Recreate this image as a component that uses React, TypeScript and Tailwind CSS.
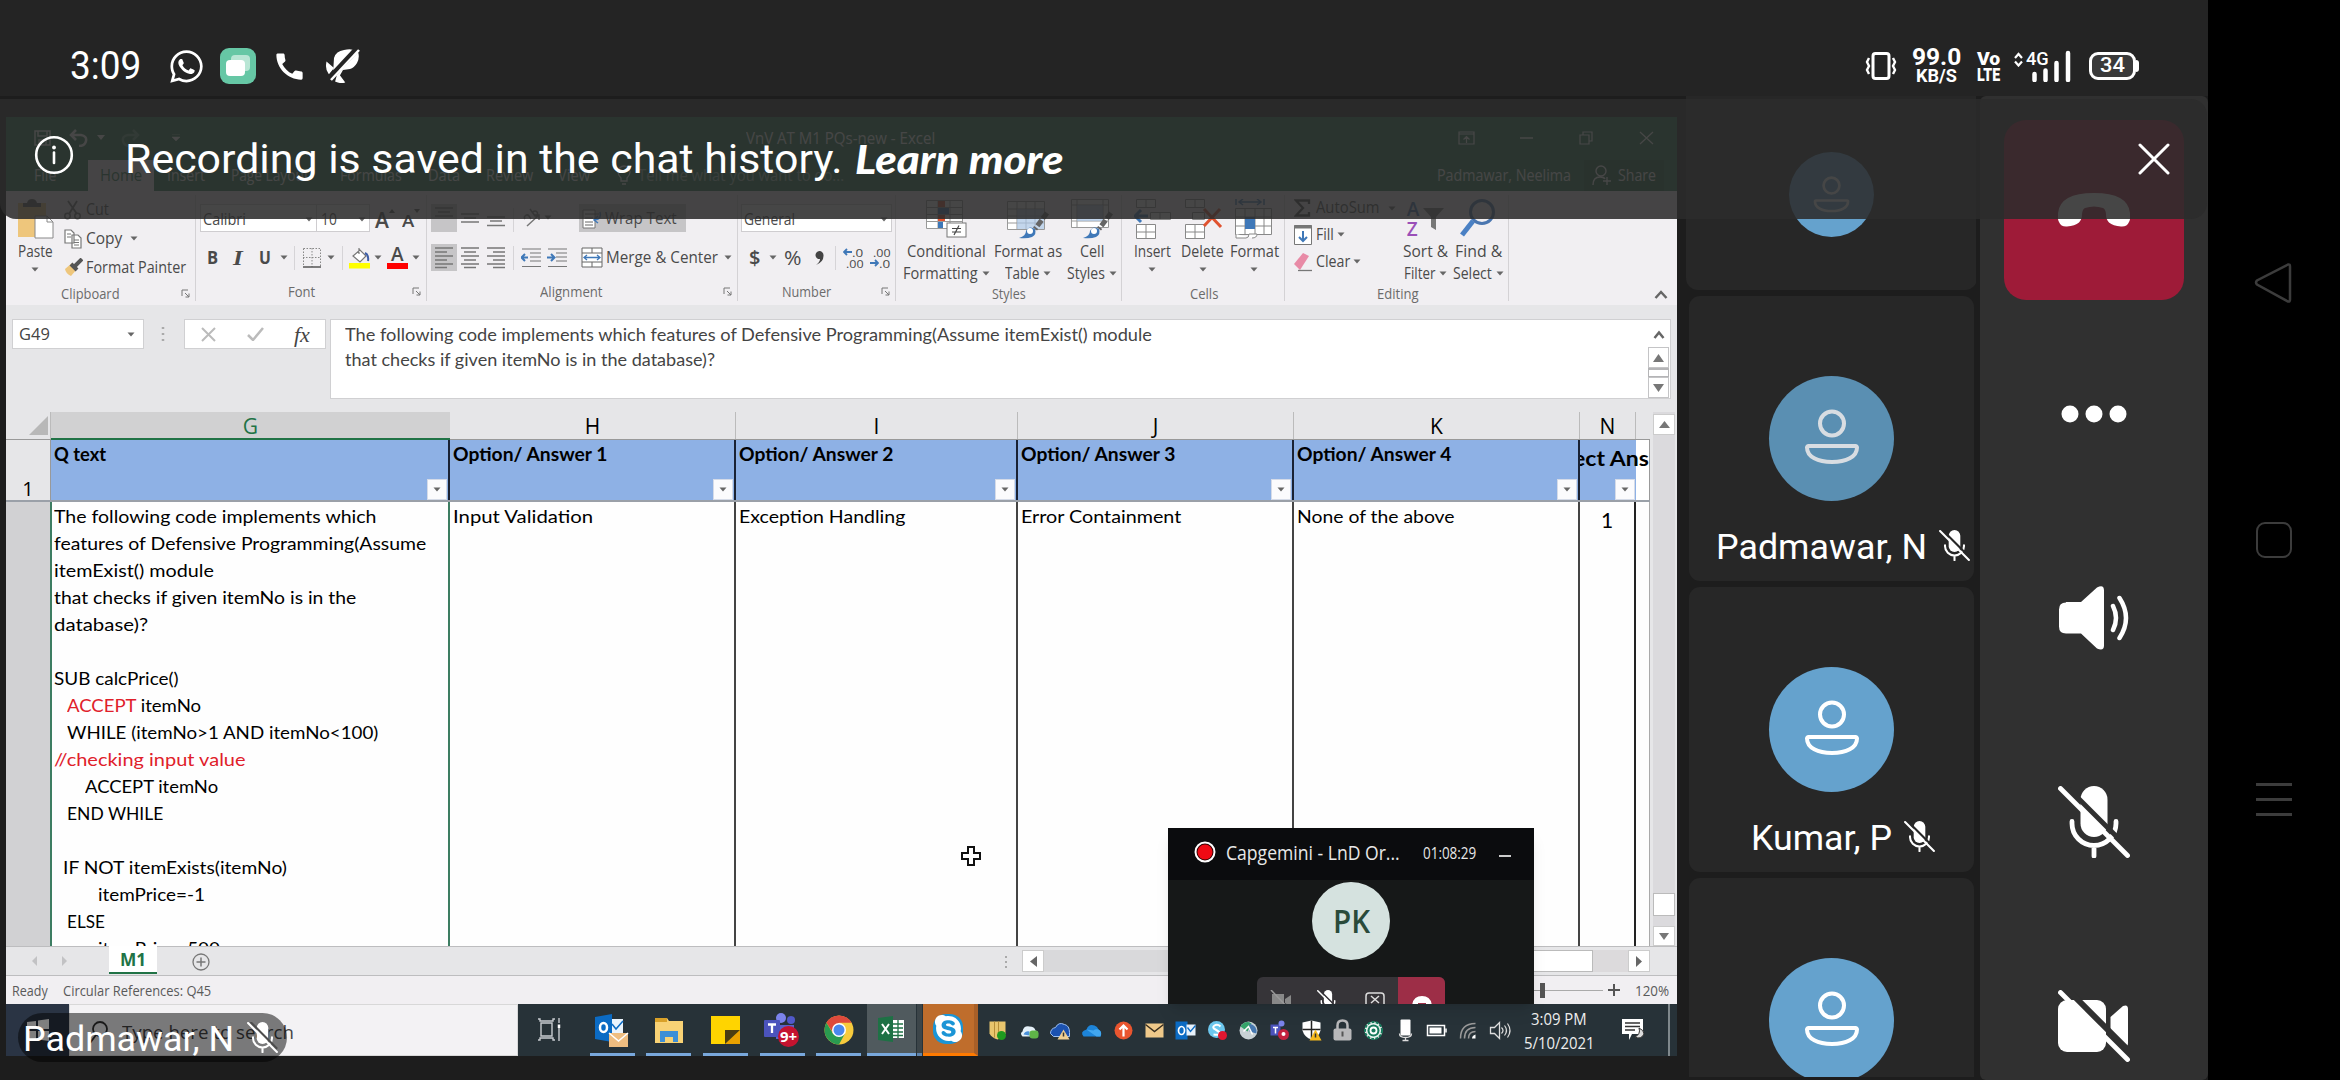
import React, { useLayoutEffect, useRef, useState } from "react";
import { FaSkype, FaWhatsapp } from "react-icons/fa";
import { MdCall } from "react-icons/md";

/* Text scaled horizontally so that it fills a given width. */
function Fit({ w, className = "", children }: { w: number; className?: string; children: React.ReactNode }) {
  const ref = useRef<HTMLSpanElement>(null);
  const [k, setK] = useState(1);
  useLayoutEffect(() => {
    if (ref.current) setK(w / ref.current.offsetWidth);
  }, [w]);
  return (
    <span className={`block shrink-0 whitespace-pre ${className}`} style={{ width: w }}>
      <span ref={ref} className="inline-block origin-left" style={{ transform: `scaleX(${k})` }}>
        {children}
      </span>
    </span>
  );
}

type SvgProps = { w: number; h: number; vb?: string; className?: string; children: React.ReactNode };
const S = ({ w, h, vb, className = "", children }: SvgProps) => (
  <svg width={w} height={h} viewBox={vb ?? `0 0 ${w} ${h}`} fill="none" className={`block shrink-0 ${className}`}>
    {children}
  </svg>
);

const Ar = ({ className = "" }: { className?: string }) => (
  <S w={8} h={5} className={className}>
    <path d="M.5 .5h7L4 4.5z" fill="#666" />
  </S>
);
const Sep = ({ className = "" }: { className?: string }) => <i className={`block h-6 w-px shrink-0 bg-[#d6d4d7] ${className}`} />;

const Person = ({ size, stroke = "#fff" }: { size: number; stroke?: string }) => (
  <S w={size} h={size} vb="0 0 56 56">
    <circle cx="28" cy="14.500" r="12" stroke={stroke} strokeWidth="4" />
    <path d="M4.500 37h47a1.500 1.500 0 0 1 1.500 1.500C53 48 42 53 28 53S3 48 3 38.500A1.500 1.500 0 0 1 4.500 37z" stroke={stroke} strokeWidth="4" />
  </S>
);

const MicOff = ({ size, gap, className }: { size: number; gap: string; className?: string }) => (
  <S w={size} h={size} vb="0 0 72 72" className={className}>
    <rect x="22.500" y="0" width="27" height="51" rx="13.500" fill="#fff" />
    <path d="M14 35.500v2a22 22 0 0 0 44 0v-2M36 60v10" stroke="#fff" strokeWidth="4.800" strokeLinecap="round" />
    <path d="M8 0l62 62" stroke={gap} strokeWidth="5" />
    <path d="M2.500 2.500l67 67" stroke="#fff" strokeWidth="4.800" strokeLinecap="round" />
  </S>
);

/* ---------- phone status bar ---------- */
function StatusBar() {
  return (
    <div className="flex h-24 w-[2208px] bg-[#242424] pt-[46px] font-[Roboto] text-white">
      <div className="flex h-10 items-center">
        <Fit w={71} className="ml-[70px] text-[38px] leading-10">3:09</Fit>
        <FaWhatsapp className="ml-[27px] size-[37px]" />
        <S w={36} h={36} className="ml-[15px]">
          <rect width="36" height="36" rx="9" fill="#66c7a5" />
          <rect x="11" y="7" width="19" height="16" rx="4" fill="#b9e6d5" />
          <rect x="6" y="12" width="19" height="16" rx="4" fill="#fff" />
        </S>
        <MdCall className="ml-[16px] size-[35px]" />
        <S w={36} h={34} className="ml-[18px]">
          <path d="M9 9q2-7 10-8 9-2 14 2 2 5-1 11-3 5-7 6l-7 1-4 7-6-3z" fill="#fff" />
          <path d="M2 14q-1 6 2 10l4-5zM13 25l6 8q-4 1-8-1z" fill="#fff" stroke="#fff" strokeWidth="1.500" />
          <path d="M32 0L4 30" stroke="#242424" strokeWidth="6" />
          <path d="M34 1L6 31" stroke="#fff" strokeWidth="2.500" />
        </S>
      </div>
      <div className="ml-auto mr-[69px] flex h-10 items-center font-bold">
        <S w={33} h={28} className="-ml-px">
          <rect x="8" y="1.500" width="16" height="25" rx="2.500" stroke="#fff" strokeWidth="3" />
          <path d="M4 6l-2 4 2 4-2 4 2 4M28 6l2 4-2 4 2 4-2 4" stroke="#fff" strokeWidth="2.400" />
        </S>
        <div className="ml-[14px] mt-px flex flex-col items-center">
          <Fit w={49} className="text-[23px] leading-[19px]">99.0</Fit>
          <Fit w={41} className="text-[18.500px] leading-[19px]">KB/S</Fit>
        </div>
        <div className="ml-[16px] mt-px flex flex-col">
          <Fit w={23} className="text-[18.500px] font-black leading-[16px]">Vo</Fit>
          <Fit w={23} className="text-[18.500px] font-black leading-[16px]">LTE</Fit>
        </div>
        <div className="ml-[14px] flex h-[32px] w-[58px]">
          <S w={9} h={15} className="mt-[2px]">
            <path d="M1 6l3.500-4L8 6M1 9.500l3.500 4 3.500-4" stroke="#fff" strokeWidth="2.200" />
          </S>
          <Fit w={23} className="ml-[3px] h-4 text-[19px] font-medium leading-[18px]">4G</Fit>
          <S w={40} h={32} className="-ml-[17px]">
            <path d="M2.500 24v6M13.500 20.500v9.500M24.500 13v17M36 3v27" stroke="#fff" strokeWidth="4.500" strokeLinecap="round" />
          </S>
        </div>
        <div className="ml-[17px] flex items-center">
          <div className="flex h-7 w-[47px] items-center justify-center rounded-[9px] border-[3px] border-white bg-[#3a3a3a] text-[21px] font-medium">
            <Fit w={25}>34</Fit>
          </div>
          <i className="block h-3 w-[3px] rounded-r-full bg-white" />
        </div>
      </div>
    </div>
  );
}

/* ---------- shared Excel window ---------- */
function TitleBar() {
  return (
    <div className="h-[74px] bg-[#217346] text-[16px] text-white">
      <div className="flex h-[41px] items-center">
        <S w={17} h={16} className="ml-[28px]">
          <path d="M1 1h15v14H1zM4 1v5h9V1M5 15v-5h7v5" stroke="#fff" strokeWidth="1.500" />
        </S>
        <S w={19} h={18} className="ml-[18px]">
          <path d="M2 6h10q6 1 5 6t-7 5M7 1L2 6l5 5" stroke="#fff" strokeWidth="2.500" />
        </S>
        <S w={8} h={5} className="ml-[9px]"><path d="M0 0h8L4 5z" fill="#fff" /></S>
        <S w={19} h={18} className="ml-[16px] opacity-30">
          <path d="M17 6H7q-6 1-5 6t7 5M12 1l5 5-5 5" stroke="#fff" strokeWidth="2.500" />
        </S>
        <S w={8} h={7} className="ml-[32px]"><path d="M0 0h8M0 3h8L4 7z" fill="#fff" stroke="#fff" strokeWidth=".5" /></S>
        <Fit w={189} className="ml-[566px]">VnV AT M1 PQs-new - Excel</Fit>
        <S w={17} h={14} className="ml-[523px]"><path d="M1 1h15v12H1zM1 3h15M8.500 12V6M5.500 8.500l3-3 3 3" stroke="#fff" strokeWidth="1.200" /></S>
        <S w={13} h={2} className="ml-[45px]"><path d="M0 1h13" stroke="#fff" strokeWidth="1.500" /></S>
        <S w={14} h={14} className="ml-[46px]"><path d="M1 4h9v9H1zM4 4V1h9v9h-3" stroke="#fff" strokeWidth="1.200" /></S>
        <S w={15} h={14} className="ml-[46px]"><path d="M1 1l13 12M14 1L1 13" stroke="#fff" strokeWidth="1.200" /></S>
      </div>
      <div className="flex h-[33px] items-end leading-[31px]">
        <Fit w={22} className="ml-[28px]">File</Fit>
        <div className="ml-[32px] flex h-[31px] w-[66px] items-center bg-[#f2f0f3] pl-3 text-[#217346]"><Fit w={42}>Home</Fit></div>
        <Fit w={38} className="ml-[13px]">Insert</Fit>
        <Fit w={78} className="ml-[26px]">Page Layout</Fit>
        <Fit w={62} className="ml-[31px]">Formulas</Fit>
        <Fit w={32} className="ml-[26px]">Data</Fit>
        <Fit w={47} className="ml-[26px]">Review</Fit>
        <Fit w={32} className="ml-[25px]">View</Fit>
        <S w={14} h={20} className="mb-[6px] ml-[27px]"><path d="M4 13q-3-3-3-6a6 6 0 0 1 12 0q0 3-3 6v3H4zM5 19h4" stroke="#fff" strokeWidth="1.300" /></S>
        <Fit w={206} className="ml-[7px] opacity-60">Tell me what you want to do...</Fit>
        <Fit w={134} className="ml-[593px]">Padmawar, Neelima</Fit>
        <div className="ml-[13px] flex h-[31px] w-[80px] items-center bg-[#1b5e39] pl-2">
          <S w={20} h={21}><path d="M9 1a5 5 0 1 1 0 10 5 5 0 0 1 0-10zM1 20q0-8 7-8 4 0 5 2M15 12v8M11 16h8" stroke="#fff" strokeWidth="1.400" /></S>
          <Fit w={38} className="ml-[6px]">Share</Fit>
        </div>
      </div>
    </div>
  );
}

function Group({ w, label, lw, launcher, children, className }: { w: string; label: string; lw: number; launcher?: boolean; className?: string; children: React.ReactNode }) {
  return (
    <div className={`flex h-[106px] shrink-0 flex-col border-r border-[#d4d2d5] ${w}`}>
      <div className="h-[86px]">{children}</div>
      <div className="mt-[2px] flex h-5 items-center text-[14px] text-[#6b6b6b]">
        <Fit w={lw} className={className}>{label}</Fit>
        {launcher && (
          <S w={9} h={9} className="ml-auto mr-[5px]"><path d="M1 7V1h6M4 4l4 4M8 4.500V8H4.500" stroke="#777" strokeWidth="1" /></S>
        )}
      </div>
    </div>
  );
}

const Lines = ({ kind }: { kind: "l" | "c" | "r" | "t" | "m" | "b" }) => {
  const d = {
    l: "M0 1h18M0 5h12M0 9h18M0 13h12M0 17h18M0 20.500h12",
    c: "M0 1h18M3 5h12M0 9h18M3 13h12M0 17h18M3 20.500h12",
    r: "M0 1h18M6 5h12M0 9h18M6 13h12M0 17h18M6 20.500h12",
    t: "M0 1h18M3 5h12M0 9h18",
    m: "M0 7h18M3 11h12M0 15h18",
    b: "M0 12h18M3 16h12M0 20.500h18",
  }[kind];
  return <S w={18} h={22}><path d={d} stroke="#777" strokeWidth="1.300" /></S>;
};

const Big = ({ w, icon, a, aw, b, bw }: { w: string; icon: React.ReactNode; a: string; aw: number; b?: string; bw?: number }) => (
  <div className={`flex shrink-0 flex-col items-center ${w}`}>
    <div className="mt-1 flex h-[40px] items-center">{icon}</div>
    <Fit w={aw} className="mt-px leading-[22px]">{a}</Fit>
    <div className="flex h-[22px] items-center gap-1">
      {b && <Fit w={bw!} className="leading-[22px]">{b}</Fit>}
      <Ar className={b ? "" : "-mt-2"} />
    </div>
  </div>
);

const Brush = ({ x }: { x: number }) => (
  <g transform={`translate(${x} 0)`}>
    <path d="M28 14L16 30" stroke="#666" strokeWidth="5" strokeDasharray="7 2" />
    <path d="M0 39q7-2 7-7 3-6 9-2 2 5-3 8-5 2-13 1z" fill="#3f78b8" />
    <circle cx="11" cy="32" r="3" fill="#fff" />
  </g>
);

function Ribbon() {
  return (
    <div className="flex h-[114px] bg-[#f1eff2] pt-1 text-[15.500px] text-[#4a4a4a]">
      <Group w="w-[190px]" label="Clipboard" lw={59} launcher className="ml-[55px]">
        <div className="flex">
          <Big w="w-[58px]" a="Paste" aw={35} icon={
            <S w={37} h={40}>
              <rect x="1" y="4" width="28" height="34" fill="#eec67c" /><path d="M6 8V4h4q1-4 5-4t5 4h4v4z" fill="#555" />
              <path d="M18 17h12l6 6v16H18z" fill="#fff" stroke="#888" /><path d="M30 17v6h6" stroke="#888" />
            </S>} />
          <div className="flex flex-col pt-px">
            <div className="flex h-7 items-center">
              <S w={18} h={20}><path d="M4 1l9 13M13 1L5 14" stroke="#666" strokeWidth="1.800" /><circle cx="3.500" cy="16" r="2.700" stroke="#666" strokeWidth="1.500" /><circle cx="13.500" cy="16" r="2.700" stroke="#666" strokeWidth="1.500" /></S>
              <Fit w={23} className="ml-1">Cut</Fit>
            </div>
            <div className="flex h-[29px] items-center">
              <S w={18} h={20}><path d="M1 1h6l3 3v10H1zM8 6h6l3 3v10H8z" fill="#fff" stroke="#777" strokeWidth="1.200" /><path d="M10 11h5M10 13.500h5M10 16h5M3 5h4M3 8h4" stroke="#777" /></S>
              <Fit w={36} className="ml-1">Copy</Fit>
              <Ar className="ml-2" />
            </div>
            <div className="flex h-[29px] items-center">
              <S w={19} h={19}><path d="M1 11l7-6 5 6-6 7q-5-2-6-7z" fill="#eec67c" /><path d="M7 6l6 6M11 8l7-7" stroke="#555" strokeWidth="4" /></S>
              <Fit w={100} className="ml-[3px]">Format Painter</Fit>
            </div>
          </div>
        </div>
      </Group>

      <Group w="w-[231px]" label="Font" lw={27} launcher className="ml-[92px]">
        <div className="flex h-[37px] items-end">
          <div className="ml-1 flex h-[28px] w-[117px] items-center border border-[#cfcdd0] bg-white pl-[2px] pt-[3px]"><Fit w={43}>Calibri</Fit><Ar className="ml-auto mr-[3px]" /></div>
          <div className="flex h-[28px] w-[53px] items-center border border-l-0 border-[#cfcdd0] bg-white pl-1 pt-[3px]"><Fit w={16}>10</Fit><Ar className="ml-auto mr-[3px]" /></div>
          <Fit w={14} className="ml-[5px] text-[21px] font-semibold leading-[24px]">A</Fit>
          <S w={6} h={4} className="mb-[19px]"><path d="M0 4h6L3 0z" fill="#555" /></S>
          <Fit w={12} className="ml-[7px] text-[17px] font-semibold leading-[22px]">A</Fit>
          <S w={6} h={4} className="mb-[19px]"><path d="M0 0h6L3 4z" fill="#555" /></S>
        </div>
        <div className="mt-3 flex h-[27px] items-center">
          <Fit w={11} className="ml-[11px] text-[18px] font-bold">B</Fit>
          <Fit w={10} className="ml-[15px] font-['Liberation_Serif'] text-[20px] font-bold italic">I</Fit>
          <Fit w={12} className="ml-[16px] text-[17px] font-bold underline">U</Fit>
          <Ar className="ml-[9px]" />
          <Sep className="ml-[6px]" />
          <S w={18} h={20} className="ml-[8px]"><path d="M.5 .5h17v18M.5 .5v18M9 0v19M0 9.500h18" stroke="#888" strokeDasharray="1.500 1.500" /><path d="M0 19h18" stroke="#555" strokeWidth="1.500" /></S>
          <Ar className="ml-[6px]" />
          <Sep className="ml-[7px]" />
          <S w={21} h={22} className="ml-[6px]"><rect y="16" width="21" height="5.500" fill="#ff0" /><path d="M4 9l7-6 6 6-6 6zM10 7V1" fill="#fff" stroke="#777" strokeWidth="1.200" /><path d="M16 6q4 2 3 8" stroke="#3f5fa8" strokeWidth="2" /></S>
          <Ar className="ml-1" />
          <div className="ml-[5px] flex h-[22px] w-[21px] flex-col items-center justify-end border-b-[6px] border-[#f00]"><Fit w={13} className="text-[19px] font-semibold leading-[17px]">A</Fit></div>
          <Ar className="ml-1" />
        </div>
      </Group>

      <Group w="w-[311px]" label="Alignment" lw={63} launcher className="ml-[113px]">
        <div className="flex h-[37px] items-end">
          <div className="ml-1 flex h-[28px] w-[26px] items-center justify-center bg-[#c6c5c7]"><Lines kind="t" /></div>
          <div className="ml-1 mb-[3px]"><Lines kind="m" /></div>
          <div className="ml-2 mb-[5px]"><Lines kind="b" /></div>
          <Sep className="ml-2" />
          <S w={18} h={22} className="mb-1 ml-[9px]"><path d="M2 13a2.500 2.500 0 1 1 4-3l2 3M7 3l5 7a2.500 2.500 0 1 0-2-4M4 20L16 9M16 14V9h-5" stroke="#777" strokeWidth="1.500" /></S>
          <Ar className="mb-[12px] ml-[3px]" />
          <div className="ml-[27px] flex h-[28px] w-[107px] items-center bg-[#c6c5c7] pl-[3px] pt-px">
            <S w={20} h={20}><path d="M1 1h12v18H1z" fill="#fff" stroke="#777" /><path d="M3 5h14M3 9h8M3 13h8M3 16h8" stroke="#666" /><path d="M18 3q2 7-5 8M16 7l-4 4 4 3" stroke="#3f78b8" strokeWidth="1.500" /></S>
            <Fit w={72} className="ml-[3px]">Wrap Text</Fit>
          </div>
        </div>
        <div className="mt-3 flex h-[27px] items-center">
          <div className="ml-1 flex h-[27px] w-[26px] items-center justify-center bg-[#c6c5c7]"><Lines kind="l" /></div>
          <div className="ml-1"><Lines kind="c" /></div>
          <div className="ml-2"><Lines kind="r" /></div>
          <Sep className="ml-2" />
          <S w={20} h={20} className="ml-[7px]"><path d="M1 1h19M9 5h11M9 9h11M9 13h11M1 18.500h19" stroke="#777" strokeWidth="1.200" /><path d="M0 9.500h7M4 6L.5 9.500 4 13" stroke="#3f78b8" strokeWidth="2" /></S>
          <S w={20} h={20} className="ml-[6px]"><path d="M1 1h19M9 5h11M9 9h11M9 13h11M1 18.500h19" stroke="#777" strokeWidth="1.200" /><path d="M0 9.500h7M4 6l3.500 3.500L4 13" stroke="#3f78b8" strokeWidth="2" /></S>
          <S w={22} h={21} className="ml-[14px]"><path d="M1 1h20v19H1zM1 6h20M1 15h20M11 1v5M11 15v5" fill="#fff" stroke="#666" /><path d="M3 10.500h16M6 8l-3 2.500L6 13M16 8l3 2.500-3 2.500" stroke="#3f78b8" strokeWidth="1.300" /></S>
          <Fit w={112} className="ml-[3px]">Merge & Center</Fit>
          <Ar className="ml-[6px]" />
        </div>
      </Group>

      <Group w="w-[158px]" label="Number" lw={49} launcher className="ml-[44px]">
        <div className="flex h-[37px] items-end"><div className="ml-[3px] flex h-[28px] w-[151px] items-center border border-[#cfcdd0] bg-white pl-[2px] pt-[3px]"><Fit w={51}>General</Fit><Ar className="ml-auto mr-[3px]" /></div></div>
        <div className="mt-3 flex h-[27px] items-center">
          <Fit w={11} className="ml-[11px] text-[20px] font-semibold">$</Fit>
          <Ar className="ml-[9px]" />
          <Fit w={18} className="ml-[7px] text-[20px]">%</Fit>
          <S w={9} h={15} className="ml-[13px]"><path d="M1 15q4-3 4-6a4 4 0 1 1 3.500-4Q9 12 1 15z" fill="#444" /></S>
          <Sep className="ml-[11px]" />
          <div className="ml-[7px] flex flex-col text-[11px] leading-[11px]">
            <div className="flex items-center"><S w={9} h={8}><path d="M1 4h8M4 1L1 4l3 3" stroke="#3f78b8" strokeWidth="1.800" /></S><Fit w={11}>.0</Fit></div>
            <Fit w={17} className="ml-[3px]">.00</Fit>
          </div>
          <div className="ml-[7px] flex flex-col text-[11px] leading-[11px]">
            <Fit w={17} className="ml-[3px]">.00</Fit>
            <div className="flex items-center"><S w={9} h={8}><path d="M0 4h8M5 1l3 3-3 3" stroke="#3f78b8" strokeWidth="1.800" /></S><Fit w={11}>.0</Fit></div>
          </div>
        </div>
      </Group>

      <Group w="w-[226px]" label="Styles" lw={34} className="ml-[96px]">
        <div className="flex pl-[2px]">
          <Big w="w-[96px]" a="Conditional" aw={79} b="Formatting" bw={75} icon={
            <S w={41} h={38}><path d="M.5 .5h36v28H.5zM0 7.500h37M0 14.500h37M0 21.500h37M24 0v29M12 0v29" fill="#fff" stroke="#999" /><path d="M12 1h7v6h-7zM12 15h7v6h-7z" fill="#e0522f" /><path d="M12 8h11v6H12zM12 22h5v6h-5z" fill="#3f78b8" /><rect x="21" y="23" width="19" height="14" fill="#fff" stroke="#777" /><path d="M26 28.500h9M26 32h9M33 25.500L28 35" stroke="#444" strokeWidth="1.200" /></S>} />
          <Big w="w-[68px]" a="Format as" aw={68} b="Table" bw={34} icon={
            <S w={42} h={40}><path d="M.5 2.500h37v28H.5zM0 10h37M0 17h37M0 24h37M10 2v28M19 2v28M28 2v28" fill="#fff" stroke="#999" /><path d="M10 10h27v20H10z" fill="#a9c4e4" opacity=".7" /><Brush x={12} /></S>} />
          <Big w="w-[60px]" a="Cell" aw={24} b="Styles" bw={38} icon={
            <S w={42} h={40}><path d="M.5 .5h37v28H.5zM0 6h37M0 22h37M6 0v28M32 0v28" fill="#fff" stroke="#999" /><path d="M6 6h26v16H6z" fill="#a9c4e4" opacity=".7" /><Brush x={12} /></S>} />
        </div>
      </Group>

      <Group w="w-[163px]" label="Cells" lw={28} className="ml-[68px]">
        <div className="flex pl-1">
          <Big w="w-[52px]" a="Insert" aw={37} icon={
            <S w={37} h={40}><path d="M2.500 .5h19v8h-19zM12 0v9M16.500 13.500h20v7h-20zM26 13v8M2.500 25.500h19v14h-19zM2 33h20M12 25v15" fill="#fff" stroke="#888" /><path d="M2 17h12M7 11l-6 6 6 6" stroke="#3f78b8" strokeWidth="3" /></S>} />
          <Big w="w-[49px]" a="Delete" aw={43} icon={
            <S w={40} h={40}><path d="M2.500 .5h19v8h-19zM12 0v9M9.500 13.500h12v7h-12zM2.500 25.500h19v14h-19zM2 33h20M12 25v15" fill="#fff" stroke="#888" /><path d="M21 10l17 18M37 10L21 27" stroke="#e0522f" strokeWidth="3" /></S>} />
          <Big w="w-[54px]" a="Format" aw={49} icon={
            <S w={38} h={40}><path d="M1 0v6M29 0v6M4 3h22M8 0L4 3l4 3M22 0l4 3-4 3" stroke="#3f78b8" strokeWidth="1.500" /><path d="M.5 9.500h36v26H.5zM0 18h37M0 27h37M10 9v26M20 9v26M29 9v26" fill="#fff" stroke="#888" /><path d="M10 18h10v12H10z" fill="#3f78b8" /><path d="M1 35v4h10q3 0 3-4h8q0 4-5 4" fill="#fff" stroke="#888" /></S>} />
        </div>
      </Group>

      <Group w="w-[224px]" label="Editing" lw={42} className="ml-[92px]">
        <div className="flex pl-[9px]">
          <div className="flex w-[106px] flex-col">
            <div className="flex h-[26px] items-center"><S w={17} h={18}><path d="M15 5V1.500H2L9 9l-7 7.500h13V13" stroke="#444" strokeWidth="2.300" /></S><Fit w={64} className="ml-[5px]">AutoSum</Fit><Ar className="ml-2" /></div>
            <div className="flex h-[27px] items-center"><S w={18} h={20}><path d="M.5 .5h17v19H.5z" fill="#fff" stroke="#777" /><path d="M0 2h18" stroke="#777" strokeWidth="3" /><path d="M9 6v10M5 12l4 4 4-4" stroke="#3f78b8" strokeWidth="2" /></S><Fit w={18} className="ml-1">Fill</Fit><Ar className="ml-[3px]" /></div>
            <div className="flex h-[27px] items-center"><S w={18} h={20}><path d="M0 12L9 1l6 3-9 14z" fill="#e88aa6" /><path d="M4 18.500h14" stroke="#777" strokeWidth="1.300" /></S><Fit w={34} className="ml-1">Clear</Fit><Ar className="ml-[3px]" /></div>
          </div>
          <Big w="w-[51px]" a="Sort &" aw={45} b="Filter" bw={31} icon={
            <div className="flex items-center"><div className="flex flex-col text-[19px] font-semibold leading-[20px]"><span className="text-[#3f6fb0]">A</span><span className="text-[#9a4fb8]">Z</span></div><S w={21} h={24} className="ml-1"><path d="M0 1h21l-8 9v13l-5-3V10z" fill="#777" /></S></div>} />
          <Big w="w-[54px]" a="Find &" aw={47} b="Select" bw={39} icon={
            <S w={36} h={40}><circle cx="22" cy="13" r="11.500" stroke="#4a76b0" strokeWidth="3" /><path d="M13 22L2 36" stroke="#4a80c4" strokeWidth="5" /></S>} />
        </div>
      </Group>
      <div className="flex flex-1 items-end justify-end pb-[6px] pr-[9px]"><S w={14} h={9}><path d="M1.500 8L7 2l5.500 6" stroke="#666" strokeWidth="2.500" /></S></div>
    </div>
  );
}

function FormulaBar() {
  return (
    <div className="flex h-[107px] items-start bg-[#e6e6e8] pt-[14px]">
      <div className="ml-[6px] flex h-[30px] w-[132px] items-center border border-[#d0d0d2] bg-white px-[6px] text-[17px] text-[#444]"><Fit w={31}>G49</Fit><Ar className="ml-auto mr-[2px]" /></div>
      <S w={4} h={16} className="ml-[17px] mt-[7px]"><path d="M2 1v2M2 7v2M2 13v2" stroke="#aaa" strokeWidth="2.500" /></S>
      <div className="ml-[19px] flex h-[30px] w-[142px] items-center border border-[#d0d0d2] bg-white">
        <S w={15} h={15} className="ml-[16px]"><path d="M1 1l13 13M14 1L1 14" stroke="#bbb" strokeWidth="2" /></S>
        <S w={17} h={14} className="ml-[31px]"><path d="M1 8l5 5L16 1" stroke="#bbb" strokeWidth="2.500" /></S>
        <Fit w={16} className="ml-[30px] font-['Liberation_Serif'] text-[22px] italic text-[#444]">fx</Fit>
      </div>
      <div className="ml-1 flex h-[80px] w-[1341px] border border-[#d0d0d2] bg-white">
        <div className="ml-[14px] mt-[2px] font-[Lato] text-[18px] leading-[25px] text-[#444]">
          <Fit w={807}>The following code implements which features of Defensive Programming(Assume itemExist() module</Fit>
          <Fit w={370}>that checks if given itemNo is in the database)?</Fit>
        </div>
        <div className="ml-auto mr-px flex w-[21px] flex-col items-center">
          <S w={12} h={9} className="mb-[8px] mt-[10px]"><path d="M1.500 8L6 2.500 10.500 8" stroke="#666" strokeWidth="2.500" /></S>
          <div className="flex h-[21px] w-full items-center justify-center border border-[#c4c4c6]"><S w={11} h={8}><path d="M0 8h11L5.500 0z" fill="#777" /></S></div>
          <div className="h-[9px] w-full border border-t-2 border-[#b4b4b6]" />
          <div className="flex h-[21px] w-full items-center justify-center border border-[#c4c4c6]"><S w={11} h={8}><path d="M0 0h11L5.500 8z" fill="#777" /></S></div>
        </div>
      </div>
    </div>
  );
}

const question: { pad?: string; w: number; t: string; red?: boolean }[] = [
  { w: 323, t: "The following code implements which" },
  { w: 372, t: "features of Defensive Programming(Assume" },
  { w: 160, t: "itemExist() module" },
  { w: 302, t: "that checks if given itemNo is in the" },
  { w: 94, t: "database)?" },
  { w: 1, t: " " },
  { w: 125, t: "SUB calcPrice()" },
  { pad: "pl-[13px]", w: 134, t: "ACCEPT itemNo" },
  { pad: "pl-[13px]", w: 311, t: "WHILE (itemNo>1 AND itemNo<100)" },
  { w: 192, t: "//checking input value", red: true },
  { pad: "pl-[31px]", w: 133, t: "ACCEPT itemNo" },
  { pad: "pl-[13px]", w: 96, t: "END WHILE" },
  { w: 1, t: " " },
  { pad: "pl-[9px]", w: 224, t: "IF NOT itemExists(itemNo)" },
  { pad: "pl-[44px]", w: 107, t: "itemPrice=-1" },
  { pad: "pl-[13px]", w: 38, t: "ELSE" },
  { pad: "pl-[44px]", w: 122, t: "itemPrice=500" },
];

const columns = [
  { w: "w-[286px]", head: "Option/ Answer 1", body: "Input Validation", bw: 140, l: "H" },
  { w: "w-[282px]", head: "Option/ Answer 2", body: "Exception Handling", bw: 166, l: "I" },
  { w: "w-[276px]", head: "Option/ Answer 3", body: "Error Containment", bw: 160, l: "J" },
  { w: "w-[286px]", head: "Option/ Answer 4", body: "None of the above", bw: 158, l: "K" },
];

const FilterBtn = () => (
  <div className="absolute bottom-0 right-px flex h-[21px] w-5 items-center justify-center border border-[#d5dbe8] bg-[#fbfbfd]"><Ar /></div>
);

function Sheet() {
  return (
    <div className="flex h-[534px] bg-[#e6e6e8]">
      <div className="w-[1644px] shrink-0">
        <div className="flex h-[28px] border-b border-[#999] text-[21px] leading-[28px] text-black">
          <div className="flex w-[45px] items-end justify-end border-r border-[#bbb] pb-1 pr-[2px]"><S w={19} h={19}><path d="M19 0v19H0z" fill="#b8b8b8" /></S></div>
          <div className="h-[28px] w-[399px] border-b-2 border-[#217346] bg-[#d1d1d2] text-center text-[#217346]">G</div>
          {columns.map((c) => <div key={c.l} className={`border-r border-[#bbb] text-center ${c.w}`}>{c.l}</div>)}
          <div className="w-[56px] border-r border-[#bbb] text-center">N</div>
        </div>
        <div className="flex h-[62px] border-b-2 border-[#9aa0a8] font-[Lato] text-[18px] font-bold leading-[27px] text-black">
          <div className="flex w-[45px] items-end justify-center border-r border-[#999] bg-[#e6e6e8] font-['Open_Sans'] text-[20px] font-normal leading-[22px]">1</div>
          <div className="relative w-[399px] border-r-2 border-[#1a2233] bg-[#8eb1e5] pl-[3px] pt-px"><Fit w={52}>Q text</Fit><FilterBtn /></div>
          {columns.map((c) => (
            <div key={c.l} className={`relative border-r-2 border-[#1a2233] bg-[#8eb1e5] pl-[3px] pt-px ${c.w}`}><Fit w={154}>{c.head}</Fit><FilterBtn /></div>
          ))}
          <div className="flex w-[70px] overflow-hidden border-r border-[#999] bg-white">
            <div className="relative w-[56px] shrink-0 bg-[#8eb1e5] pt-[5px] text-[20px]"><Fit w={76} className="-ml-[7px]">ect Ans</Fit><FilterBtn /></div>
          </div>
        </div>
        <div className="flex h-[444px] overflow-hidden bg-[#fefefe] font-[Lato] text-[18px] leading-[27px] text-black">
          <div className="w-[44px] shrink-0 bg-[#d1d1d3]" />
          <div className="w-[400px] shrink-0 border-x-2 border-[#3d7d62] pl-[2px] pt-px">
            {question.map((q, i) => (
              <div key={i} className={`h-[27px] ${q.pad ?? ""} ${q.red ? "text-[#e0202a]" : ""}`}>
                <Fit w={q.w}>{i === 7 ? <><span className="text-[#e0202a]">ACCEPT</span> itemNo</> : q.t}</Fit>
              </div>
            ))}
          </div>
          {columns.map((c) => <div key={c.l} className={`shrink-0 border-r-2 border-[#444] pl-[3px] pt-px ${c.w}`}><Fit w={c.bw}>{c.body}</Fit></div>)}
          <div className="w-[56px] shrink-0 border-r-2 border-[#222] pt-[4px] text-center text-[21px]">1</div>
          <div className="w-[14px] shrink-0 border-r border-[#aaa]" />
        </div>
      </div>
      <div className="ml-[3px] flex w-[22px] flex-col bg-[#dbdadd] pt-[2px]">
        <div className="flex h-[21px] items-center justify-center border border-[#ccc] bg-white"><S w={11} h={7}><path d="M0 7h11L5.500 0z" fill="#777" /></S></div>
        <div className="mt-[458px] h-[23px] border border-[#bbb] bg-white" />
        <div className="mt-[10px] flex h-[20px] items-center justify-center border border-[#ccc] bg-white"><S w={10} h={7}><path d="M0 0h10L5 7z" fill="#777" /></S></div>
      </div>
    </div>
  );
}

function SheetTabs() {
  return (
    <div className="flex h-[30px] border-y border-[#bdbdbf] bg-[#e6e6e8]">
      <S w={6} h={10} className="ml-[26px] mt-[9px]"><path d="M5 0v10L0 5z" fill="#c2c2c4" /></S>
      <S w={6} h={10} className="ml-[24px] mt-[9px]"><path d="M0 0v10l5-5z" fill="#c2c2c4" /></S>
      <div className="-mt-px ml-[41px] flex h-[28px] w-[48px] justify-center border-b-2 border-[#217346] bg-white text-[18px] font-bold leading-[26px] text-[#217346]"><Fit w={26}>M1</Fit></div>
      <S w={18} h={18} className="ml-[35px] mt-[6px]"><circle cx="9" cy="9" r="8" stroke="#777" strokeWidth="1.300" /><path d="M9 4.500v9M4.500 9h9" stroke="#777" strokeWidth="1.500" /></S>
      <S w={4} h={14} className="ml-[794px] mt-[8px]"><path d="M2 1v2M2 6v2M2 11v2" stroke="#aaa" strokeWidth="2" /></S>
      <div className="ml-[14px] mt-[3px] flex h-[22px] w-[22px] items-center justify-center border border-[#ccc] bg-white"><S w={7} h={11}><path d="M7 0v11L0 5.500z" fill="#666" /></S></div>
      <div className="mt-[3px] h-[22px] w-[489px] bg-[#d9d9db]" />
      <div className="mt-[3px] h-[22px] w-[60px] border border-[#bbb] bg-white" />
      <div className="mt-[3px] h-[22px] w-[35px] bg-[#dcdadc]" />
      <div className="mt-[3px] flex h-[22px] w-[22px] items-center justify-center border border-[#ccc] bg-white"><S w={7} h={11}><path d="M0 0v11l6-5.500z" fill="#666" /></S></div>
    </div>
  );
}

function TrayIcons() {
  const icons = [
    <><path d="M2 1h16v12q-4 5-8 6-6-2-8-6z" fill="#e8c56d" /><path d="M7 1v16M11 1v16" stroke="#b68e38" /><circle cx="14" cy="15" r="4.500" fill="#1f9a1f" /></>,
    <><path d="M3 16q-3-3 0-5 1-6 7-5 5 0 6 4 4 1 2 6z" fill="#e4f0f8" /><path d="M4 14q2-4 6-3v4z" fill="#4a90d8" /><rect x="10" y="10" width="9" height="8" rx="3" fill="#5fb548" /></>,
    <><path d="M0 13q0-5 5-6 3-6 9-3 5 1 5 8v4H3z" fill="#1c52b0" stroke="#9ec1f2" /><path d="M13 9l6 10H7z" fill="#f0cf92" /><path d="M13 12v4" stroke="#333" strokeWidth="1.500" /></>,
    <><path d="M2 16q-4-5 3-7 2-6 8-4 3 1 4 4 4 2 2 7z" fill="#1d84d8" /><path d="M5 9l10 7h4q2-5-2-7-3-1-5 1z" fill="#41a7f0" /></>,
    <><circle cx="10" cy="10" r="9" fill="#e9552f" /><path d="M10 16V5M6 9l4-4 4 4" stroke="#fff" strokeWidth="2.200" /></>,
    <><rect x="1" y="3" width="18" height="14" fill="#efc98a" /><path d="M1 4l9 7 9-7" stroke="#3a3020" strokeWidth="1.500" /></>,
    <><rect x="0" y="1" width="12" height="18" fill="#0b6bc4" /><rect x="11" y="4" width="9" height="11" fill="#e7f1fb" /><ellipse cx="6" cy="10" rx="3" ry="4" stroke="#fff" strokeWidth="1.700" /><path d="M12 7l3 4 5-6" stroke="#0b6bc4" strokeWidth="1.300" /></>,
    <><circle cx="9" cy="9" r="8.500" fill="#6cc7ee" /><path d="M13 6q-3-3-6-1t1 4 4 4-6 1" stroke="#fff" strokeWidth="2" /><circle cx="15" cy="15" r="4.500" fill="#e01730" /></>,
    <><circle cx="10" cy="10" r="9" fill="#c9d2d6" /><path d="M2 6q5-7 11-3l-4 8z" fill="#35a46a" /><path d="M11 3q8 2 7 10l-7-2z" fill="#4678b0" /><path d="M5 11l5-5 4 8" stroke="#fff" strokeWidth="1.500" /></>,
    <><rect x="1" y="4" width="10" height="11" fill="#4b53bc" /><path d="M3.500 7h5M6 7v6" stroke="#fff" strokeWidth="1.500" /><circle cx="12" cy="3" r="3" fill="#7b83eb" /><circle cx="14" cy="14" r="5.500" fill="#c4223f" /><circle cx="14" cy="13.500" r="2" fill="#fff" /></>,
    <><path d="M1 2l9-2 9 2v8q-2 7-9 9Q3 17 1 10z" fill="#fff" /><path d="M10 0v18M1 9h18" stroke="#222" strokeWidth="1.500" /><path d="M14 9l6 11H8z" fill="#f6b91c" /><path d="M14 13v4" stroke="#333" strokeWidth="1.500" /></>,
    <><rect x="1" y="8" width="18" height="12" rx="2" fill="#b8b8ba" /><path d="M5 9V5q0-5 5-5t5 5v4" stroke="#b8b8ba" strokeWidth="2.500" /><path d="M10 11v5" stroke="#555" strokeWidth="2" /></>,
    <><circle cx="10" cy="10" r="9" fill="#e8f2ee" /><circle cx="10" cy="10" r="8.500" stroke="#177a5c" strokeWidth="2" strokeDasharray="3 1.200" /><circle cx="10" cy="10" r="6" fill="#177a5c" /><circle cx="10" cy="10" r="3" stroke="#fff" strokeWidth="1.800" /></>,
    <><rect x="5" y="-1" width="10" height="16" rx="1" fill="#fff" /><path d="M4 13q0 4 6 4t6-4M10 17v3M7 20h6" stroke="#ddd" strokeWidth="1.300" /></>,
    <><rect x="1" y="5" width="17" height="10" stroke="#fff" strokeWidth="1.500" /><rect x="3" y="7" width="12" height="6" fill="#fff" /><path d="M19.500 8v4" stroke="#fff" strokeWidth="1.500" /></>,
    <><path d="M2 18Q2 3 17 3M6 18Q6 7 17 7M10 18q0-7 7-7" stroke="#999" strokeWidth="1.500" /><path d="M13.500 18q0-3 3.500-4v4z" fill="#fff" /></>,
    <><path d="M1 7h4l5-5v16l-5-5H1z" stroke="#ddd" strokeWidth="1.300" /><path d="M12 7q3 3 0 6M15 5q4 5 0 10M18 3q5 7 0 14" stroke="#ddd" strokeWidth="1.200" /></>,
  ];
  return (
    <div className="flex w-[533px] shrink-0">
      {icons.map((ic, i) => <div key={i} className="flex h-[52px] flex-1 items-center justify-center"><S w={21} h={21} vb="-.5 -.5 21 21" className="overflow-visible">{ic}</S></div>)}
    </div>
  );
}

const Task = ({ children, w = "w-[56.600px]", bar = "border-[#79a8dc]" }: { children: React.ReactNode; w?: string; bar?: string }) => (
  <div className={`flex h-[52px] shrink-0 justify-center ${w}`}><div className={`flex w-[45px] items-center justify-center border-b-[3px] pt-[2px] ${bar}`}>{children}</div></div>
);

function Taskbar() {
  return (
    <div className="flex h-[52px] bg-[#273238]">
      <div className="flex w-[63px] items-center justify-center bg-[#2a3444]"><S w={24} h={24}><path d="M1 4l9-1v8H1zM12 2.500L23 1v10H12zM1 13h9v8l-9-1zM12 13h11v10l-11-1.500z" fill="#fff" /></S></div>
      <div className="flex w-[449px] items-center border border-[#d8d8d8] bg-[#f3f2f4] pt-1 text-[#444]">
        <S w={21} h={24} className="ml-[18px]"><circle cx="12" cy="9" r="7" stroke="#333" strokeWidth="1.800" /><path d="M8 15l-6 8" stroke="#333" strokeWidth="1.800" /></S>
        <Fit w={172} className="ml-[13px] text-[19px]">Type here to search</Fit>
      </div>
      <div className="flex w-[66px] items-center pl-[20px]"><S w={23} h={24}><path d="M3 5h11v13H3zM0 1h2v2h13V1h2M0 22h2v-2h13v2h2M21 0v5M21 10v13" stroke="#c8ccd0" strokeWidth="1.400" /><path d="M21 6.500v3.500" stroke="#fff" strokeWidth="2.500" /></S></div>
      <Task><S w={34} h={34}><rect x="14" y="6" width="14" height="17" fill="#eaf3fc" /><path d="M0 4l17-3v28L0 26z" fill="#0b6bc4" /><ellipse cx="8.500" cy="14.500" rx="3.500" ry="4.500" stroke="#fff" strokeWidth="2.500" /><path d="M17 11l4 5 7-8" stroke="#0b6bc4" strokeWidth="1.500" /><rect x="14" y="20" width="19" height="14" fill="#efbd80" /><path d="M14 20l9.500 8 9.500-8" stroke="#fff" strokeWidth="1.500" /></S></Task>
      <Task><S w={28} h={26}><path d="M0 1h12l2 3h14v22H0z" fill="#f8d275" /><path d="M0 1h12v4H0z" fill="#d9a128" /><path d="M5 14h18v11h-5v-5h-8v5H5z" fill="#3d8fd6" /></S></Task>
      <Task><S w={29} h={30}><path d="M0 1h29v28H0z" fill="#ffd400" /><path d="M29 15v14H14z" fill="#e9a100" /><path d="M14 15h15L14 29z" fill="#4a3d12" /></S></Task>
      <Task><S w={36} h={34}><circle cx="17" cy="5" r="5" fill="#7b83eb" /><circle cx="27" cy="7" r="4" fill="#5059c9" /><rect x="12" y="12" width="18" height="14" fill="#5b62c9" /><rect x="0" y="7" width="16" height="17" rx="1" fill="#4b53bc" /><path d="M4 11.500h8M8 11.500V20" stroke="#fff" strokeWidth="2.300" /><circle cx="24.500" cy="23.500" r="10.500" fill="#c4132f" /><text x="24.500" y="29" textAnchor="middle" fontSize="15" fontWeight="700" fill="#fff">9+</text></S></Task>
      <Task><S w={30} h={30}><circle cx="15" cy="15" r="14.500" fill="#f7cb3d" /><path d="M2.400 7.800A14.500 14.500 0 0 1 27.600 7.800H15l-6 10z" fill="#de4a3c" /><path d="M2.400 7.800A14.500 14.500 0 0 0 15 29.500l6-11-12 0z" fill="#2a9b50" /><circle cx="15" cy="15" r="7" fill="#fff" /><circle cx="15" cy="15" r="5.500" fill="#4a88ee" /></S></Task>
      <div className="flex h-[52px] w-[49px] shrink-0 items-center justify-center border-b-[3px] border-[#79a8dc] bg-[#505a5e]"><S w={27} h={26}><rect x="13" y="4" width="13" height="18" fill="#fff" /><path d="M15 8h10M15 12h10M15 16h10M15 19.500h10M20 4v18" stroke="#1e7145" strokeWidth="1.300" /><path d="M0 2l15-2v26L0 24z" fill="#1e7145" /><path d="M4 8l7 10M11 8L4 18" stroke="#fff" strokeWidth="2" /></S></div>
      <div className="mx-px w-[5px] shrink-0 border-b-[3px] border-[#5f84ad] bg-[#3c4549]" />
      <div className="flex h-[52px] w-[55px] shrink-0 items-center justify-center border-b-[3px] border-r-4 border-[#ff7a00] border-r-[#a85f28] bg-[#bf6d2c]">
        <div className="flex size-[30px] items-center justify-center rounded-[13px] bg-[#1b95d6]"><FaSkype className="size-[31px] shrink-0 text-white" /></div>
      </div>
      <div className="w-1 shrink-0" />
      <TrayIcons />
      <div className="flex w-[89px] shrink-0 flex-col items-center text-[17px] leading-[24px] text-[#eee]"><Fit w={56} className="pt-[3px]">3:09 PM</Fit><Fit w={71}>5/10/2021</Fit></div>
      <div className="flex w-[59px] items-center justify-center"><S w={22} h={24}><path d="M0 1h21v15H10l-3 6v-6H0z" fill="#fff" /><path d="M3 5h15M3 8.500h15M3 12h10" stroke="#333" strokeWidth="1.300" /><path d="M17 10q2 6-4 9 6 3 9-3 0-4-5-6z" fill="#ddd" stroke="#333" /></S></div>
      <i className="ml-[5px] block h-[52px] w-[2px] bg-[#7f888c]" />
    </div>
  );
}

function CallPopup() {
  return (
    <div className="absolute left-[1162px] top-[711px] flex h-[176px] w-[366px] flex-col items-center overflow-hidden bg-[#161818] shadow-lg">
      <div className="flex h-[52px] w-full shrink-0 items-center bg-[#0b0c0e] text-[#e8e8e8]">
        <S w={22} h={22} className="-mt-1 ml-[26px]"><circle cx="11" cy="11" r="9.500" fill="#300" stroke="#fff" strokeWidth="2" /><circle cx="11" cy="11" r="7.500" fill="#f00a14" /></S>
        <Fit w={174} className="-mt-[2px] ml-[10px] text-[20px]">Capgemini - LnD Or...</Fit>
        <Fit w={53} className="-mt-[2px] ml-[23px] text-[16px]">01:08:29</Fit>
        <i className="ml-[23px] mt-1 block h-[2px] w-3 bg-[#ccc]" />
      </div>
      <div className="mt-[2px] flex size-[78px] shrink-0 items-center justify-center rounded-full bg-[#d5e2df] text-[32px] font-semibold text-[#2a4a3a]"><Fit w={37}>PK</Fit></div>
      <div className="mt-[17px] flex h-10 w-[188px] shrink-0 overflow-hidden rounded-t-md bg-[#363438]">
        <div className="flex w-[47px] justify-center pt-[13px]"><S w={22} h={22}><path d="M2 4h12v14H2zM15 9l6-4v12l-6-4z" fill="#888" /><path d="M1 0l20 21" stroke="#999" strokeWidth="1.500" /></S></div>
        <div className="flex w-[47px] justify-center pt-[13px]"><MicOff size={22} gap="#363438" /></div>
        <div className="flex w-[47px] justify-center pt-[15px]"><S w={20} h={20}><rect x="1" y="1" width="18" height="18" rx="3" stroke="#ddd" strokeWidth="1.500" /><path d="M6 4l8 7M14 4l-8 7" stroke="#ddd" strokeWidth="1.500" /></S></div>
        <div className="flex w-[47px] justify-center bg-[#9d2e47] pt-[19px]"><S w={20} h={20}><path d="M0 12Q0 0 10 0t10 12h-6V7H6v5z" fill="#fff" /></S></div>
      </div>
    </div>
  );
}

function ExcelScreen() {
  return (
    <div className="relative ml-[6px] mt-[21px] h-[939px] w-[1671px] shrink-0 font-['Open_Sans']">
      <TitleBar />
      <Ribbon />
      <FormulaBar />
      <Sheet />
      <SheetTabs />
      <div className="flex h-[28px] items-center bg-[#f1eff2] text-[15px] text-[#5a5a5a]">
        <Fit w={36} className="ml-[6px]">Ready</Fit>
        <Fit w={148} className="ml-[15px]">Circular References: Q45</Fit>
        <i className="ml-auto h-px w-[8px] bg-[#999]" />
        <i className="block h-[15px] w-[5px] bg-[#555]" />
        <i className="h-px w-[58px] bg-[#aaa]" />
        <S w={12} h={12} className="ml-[5px]"><path d="M6 0v12M0 6h12" stroke="#555" strokeWidth="2" /></S>
        <Fit w={34} className="ml-[15px] mr-2">120%</Fit>
      </div>
      <Taskbar />
      <CallPopup />
      <S w={20} h={20} className="absolute left-[955px] top-[729px]"><path d="M7 1h6v6h6v6h-6v6H7v-6H1V7h6z" fill="#fff" stroke="#111" strokeWidth="2" /></S>
      <div className="absolute left-[12px] top-[896px] flex h-[49px] w-[269px] items-center rounded-full bg-black/50 font-[Roboto] text-[35px] text-white">
        <Fit w={211} className="ml-[5px] mt-[6px]">Padmawar, N</Fit>
        <MicOff size={31} gap="#4d4d4d" className="ml-[13px]" />
      </div>
    </div>
  );
}

/* ---------- participants and controls ---------- */
function Tile({ name, nw, dim, h = "h-[285px]" }: { name?: string; nw?: number; dim?: boolean; h?: string }) {
  return (
    <div className={`ml-[3px] w-[285px] shrink-0 overflow-hidden rounded-[11px] bg-[#272727] pt-[80px] ${h}`}>
      <div className={`mx-auto flex size-[125px] items-center justify-center rounded-full pb-1 ${dim ? "bg-[#5a8fb2]" : "bg-[#65a2cd]"}`}><Person size={56} stroke={dim ? "#d8dde2" : "#fff"} /></div>
      {name && (
        <div className="mt-[20px] flex items-center justify-center gap-[12px] pl-[22px] font-[Roboto] text-[35.500px] leading-[50px] text-white">
          <Fit w={nw!} className="mt-px">{name}</Fit>
          <MicOff size={31} gap="#272727" className="-mt-[2px]" />
        </div>
      )}
    </div>
  );
}

function Controls() {
  return (
    <div className="ml-1 flex w-[228px] shrink-0 flex-col items-center rounded-md bg-[#303030] pt-6">
      <div className="flex size-[180px] shrink-0 justify-center rounded-[22px] bg-[#9e1b38] pt-[73px]"><S w={72} h={34}><path d="M0 20Q2 0 36 0t36 20q1 5-1 9-2 5-8 4.500-8-.5-12-4-3-3-3-8.500-.5-5-3-6-9-3-18 0-2.500 1-3 6 0 5.500-3 8.500-4 3.500-12 4-6 .5-8-4.500-2-4-1-9z" fill="#fff" /></S></div>
      <S w={66} h={18} className="mt-[105px]"><circle cx="9" cy="9" r="8.500" fill="#fff" /><circle cx="33" cy="9" r="8.500" fill="#fff" /><circle cx="57" cy="9" r="8.500" fill="#fff" /></S>
      <S w={72} h={64} className="mt-[163px]"><path d="M8 16h15L39 1.500q7-3.500 7 3v55q0 6-7 3L23 47.500H8q-7 0-7-7v-17q0-7 7-7z" fill="#fff" /><path d="M55 20q6 12 0 24M61.500 12q13 20 0 40" stroke="#fff" strokeWidth="4.500" strokeLinecap="round" /></S>
      <div className="mt-[136px]"><MicOff size={72} gap="#303030" /></div>
      <S w={72} h={72} className="mt-[132px]"><rect y="10" width="48" height="52" rx="9" fill="#fff" /><path d="M52.500 27L65 16q5-2 5 3v34q0 5-5 3L52.500 46z" fill="#fff" /><path d="M10 0l62 62" stroke="#303030" strokeWidth="6" /><path d="M2.500 2.500l67 67" stroke="#fff" strokeWidth="4.800" strokeLinecap="round" /></S>
    </div>
  );
}

function Banner() {
  return (
    <div className="absolute left-0 top-[99px] flex h-[120px] w-[2207px] items-center rounded-2xl rounded-tl-none bg-[#2b2b2b]/[.873] text-white">
      <S w={40} h={40} className="-mt-2 ml-[34px]"><circle cx="20" cy="20" r="17.800" stroke="#fff" strokeWidth="2.600" /><path d="M20 17.500v10.500" stroke="#fff" strokeWidth="2.600" strokeLinecap="round" /><circle cx="20" cy="12.500" r="1.900" fill="#fff" /></S>
      <Fit w={718} className="ml-[51px] mt-[2px] font-[Roboto] text-[40px] leading-[48px]">Recording is saved in the chat history.</Fit>
      <Fit w={208} className="ml-[12px] font-[Lato] text-[39px] font-black italic leading-[48px]">Learn more</Fit>
      <S w={32} h={32} className="ml-auto mr-[37px]"><path d="M2 2l28 28M30 2L2 30" stroke="#fff" strokeWidth="3" strokeLinecap="round" /></S>
    </div>
  );
}

export default function App() {
  return (
    <div className="relative flex h-[1080px] w-[2340px] overflow-hidden bg-black">
      <div className="w-[2208px] shrink-0">
        <StatusBar />
        <div className="flex h-[984px] bg-[#1d1d1d]">
          <ExcelScreen />
          <div className="ml-[9px] flex h-[981px] w-[290px] shrink-0 flex-col gap-[6px] overflow-hidden">
            <div className="h-[194px] w-[291px] shrink-0 rounded-b-[12px] bg-[#272727] pt-[56px]"><div className="mx-auto flex size-[85px] items-center justify-center rounded-full bg-[#65a2cd]"><Person size={37} /></div></div>
            <Tile name="Padmawar, N" nw={211} dim />
            <Tile name="Kumar, P" nw={141} />
            <Tile />
          </div>
          <Controls />
        </div>
      </div>
      <div className="flex w-[132px] flex-col items-center pt-[262px]">
        <S w={38} h={42} className="-ml-[2px]"><path d="M34 2.500L3 18.500q-2 2 0 4l31 17q2 .5 2-2v-33q0-2.500-2-2z" stroke="#3c3c3c" strokeWidth="2.500" /></S>
        <div className="mt-[218px] size-9 rounded-[9px] border-[2.500px] border-[#3c3c3c]" />
        <div className="mt-[225px] flex flex-col gap-3"><i className="h-[3px] w-9 bg-[#3c3c3c]" /><i className="h-[3px] w-9 bg-[#3c3c3c]" /><i className="h-[3px] w-9 bg-[#3c3c3c]" /></div>
      </div>
      <Banner />
    </div>
  );
}
